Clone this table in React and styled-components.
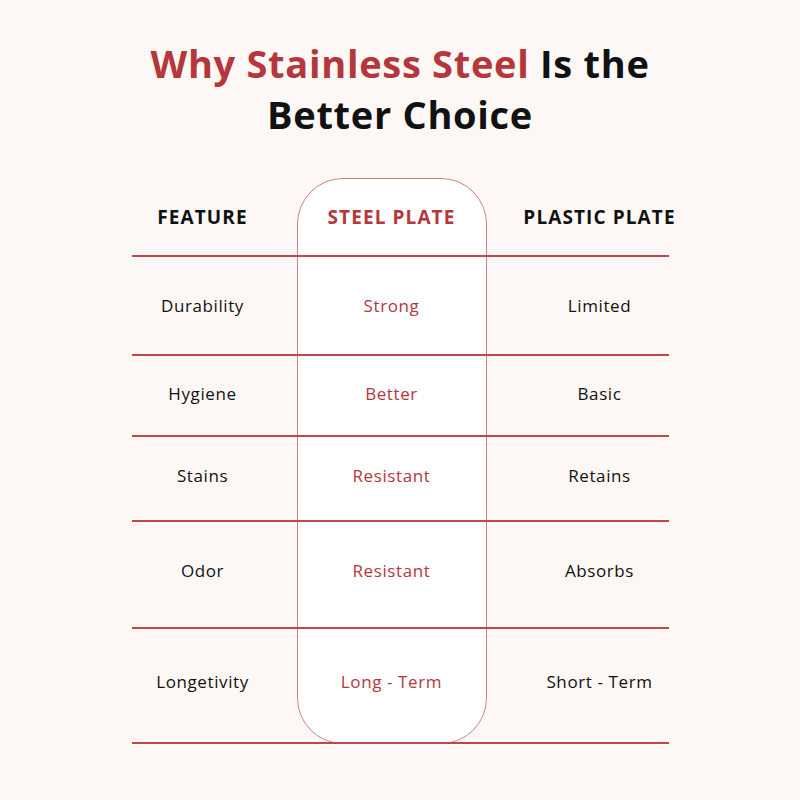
import React from "react";
import styled, { createGlobalStyle } from "styled-components";

const GlobalStyle = createGlobalStyle`
  html, body {
    margin: 0;
    padding: 0;
    background: #fdf8f5;
  }
  body {
    font-family: "Open Sans", "DejaVu Sans", sans-serif;
  }
`;

const rows = [
  { feature: "Durability", steel: "Strong", plastic: "Limited", height: 99, lift: 0 },
  { feature: "Hygiene", steel: "Better", plastic: "Basic", height: 81, lift: 2 },
  { feature: "Stains", steel: "Resistant", plastic: "Retains", height: 85, lift: 3 },
  { feature: "Odor", steel: "Resistant", plastic: "Absorbs", height: 107, lift: 4 },
  { feature: "Longetivity", steel: "Long - Term", plastic: "Short - Term", height: 115, lift: 4 },
];

const Page = styled.div`
  width: 800px;
  height: 800px;
  display: flex;
  flex-direction: column;
  align-items: center;
  padding-top: 38px;
  box-sizing: border-box;
`;

const Title = styled.h1`
  margin: 0;
  font-size: 38px;
  font-weight: 700;
  line-height: 51px;
  text-align: center;
  color: #111;
  letter-spacing: 0.7px;

  span {
    color: #b5373b;
  }
`;

const Table = styled.div`
  margin-top: 38px;
  display: grid;
  grid-template-columns: 165px 190px 182px;
  grid-template-rows: 79px ${rows.map((r) => r.height + "px").join(" ")};
`;

const Pill = styled.div`
  grid-column: 2;
  grid-row: 1 / -1;
  background: #ffffff;
  border: 1px solid #cf8385;
  border-radius: 46px;
`;

const Cell = styled.div`
  grid-column: ${(p) => p.$col};
  grid-row: ${(p) => p.$row};
  z-index: 1;
  display: flex;
  align-items: center;
  justify-content: center;
  box-sizing: border-box;
  white-space: nowrap;
  border-bottom: 2px solid #c0474a;
  padding-left: ${(p) => (p.$col === 3 ? "44px" : "0")};
  padding-right: ${(p) => (p.$col === 1 ? "23px" : "0")};
  padding-bottom: ${(p) => (p.$lift || 0) * 2}px;
  font-size: ${(p) => (p.$head ? "19px" : "17px")};
  font-weight: ${(p) => (p.$head ? 700 : 400)};
  letter-spacing: ${(p) => (p.$head ? "1.1px" : "0.6px")};
  color: ${(p) => (p.$col === 2 ? "#b5373b" : "#111")};
`;

export default function App() {
  return (
    <>
      <GlobalStyle />
      <Page>
        <Title>
          <span>Why Stainless Steel</span> Is the
          <br />
          Better Choice
        </Title>
        <Table>
          <Pill />
          <Cell $col={1} $row={1} $head>FEATURE</Cell>
          <Cell $col={2} $row={1} $head>STEEL PLATE</Cell>
          <Cell $col={3} $row={1} $head>PLASTIC PLATE</Cell>
          {rows.map((r, i) => (
            <React.Fragment key={r.feature}>
              <Cell $col={1} $row={i + 2} $lift={r.lift}>{r.feature}</Cell>
              <Cell $col={2} $row={i + 2} $lift={r.lift}>{r.steel}</Cell>
              <Cell $col={3} $row={i + 2} $lift={r.lift}>{r.plastic}</Cell>
            </React.Fragment>
          ))}
        </Table>
      </Page>
    </>
  );
}
